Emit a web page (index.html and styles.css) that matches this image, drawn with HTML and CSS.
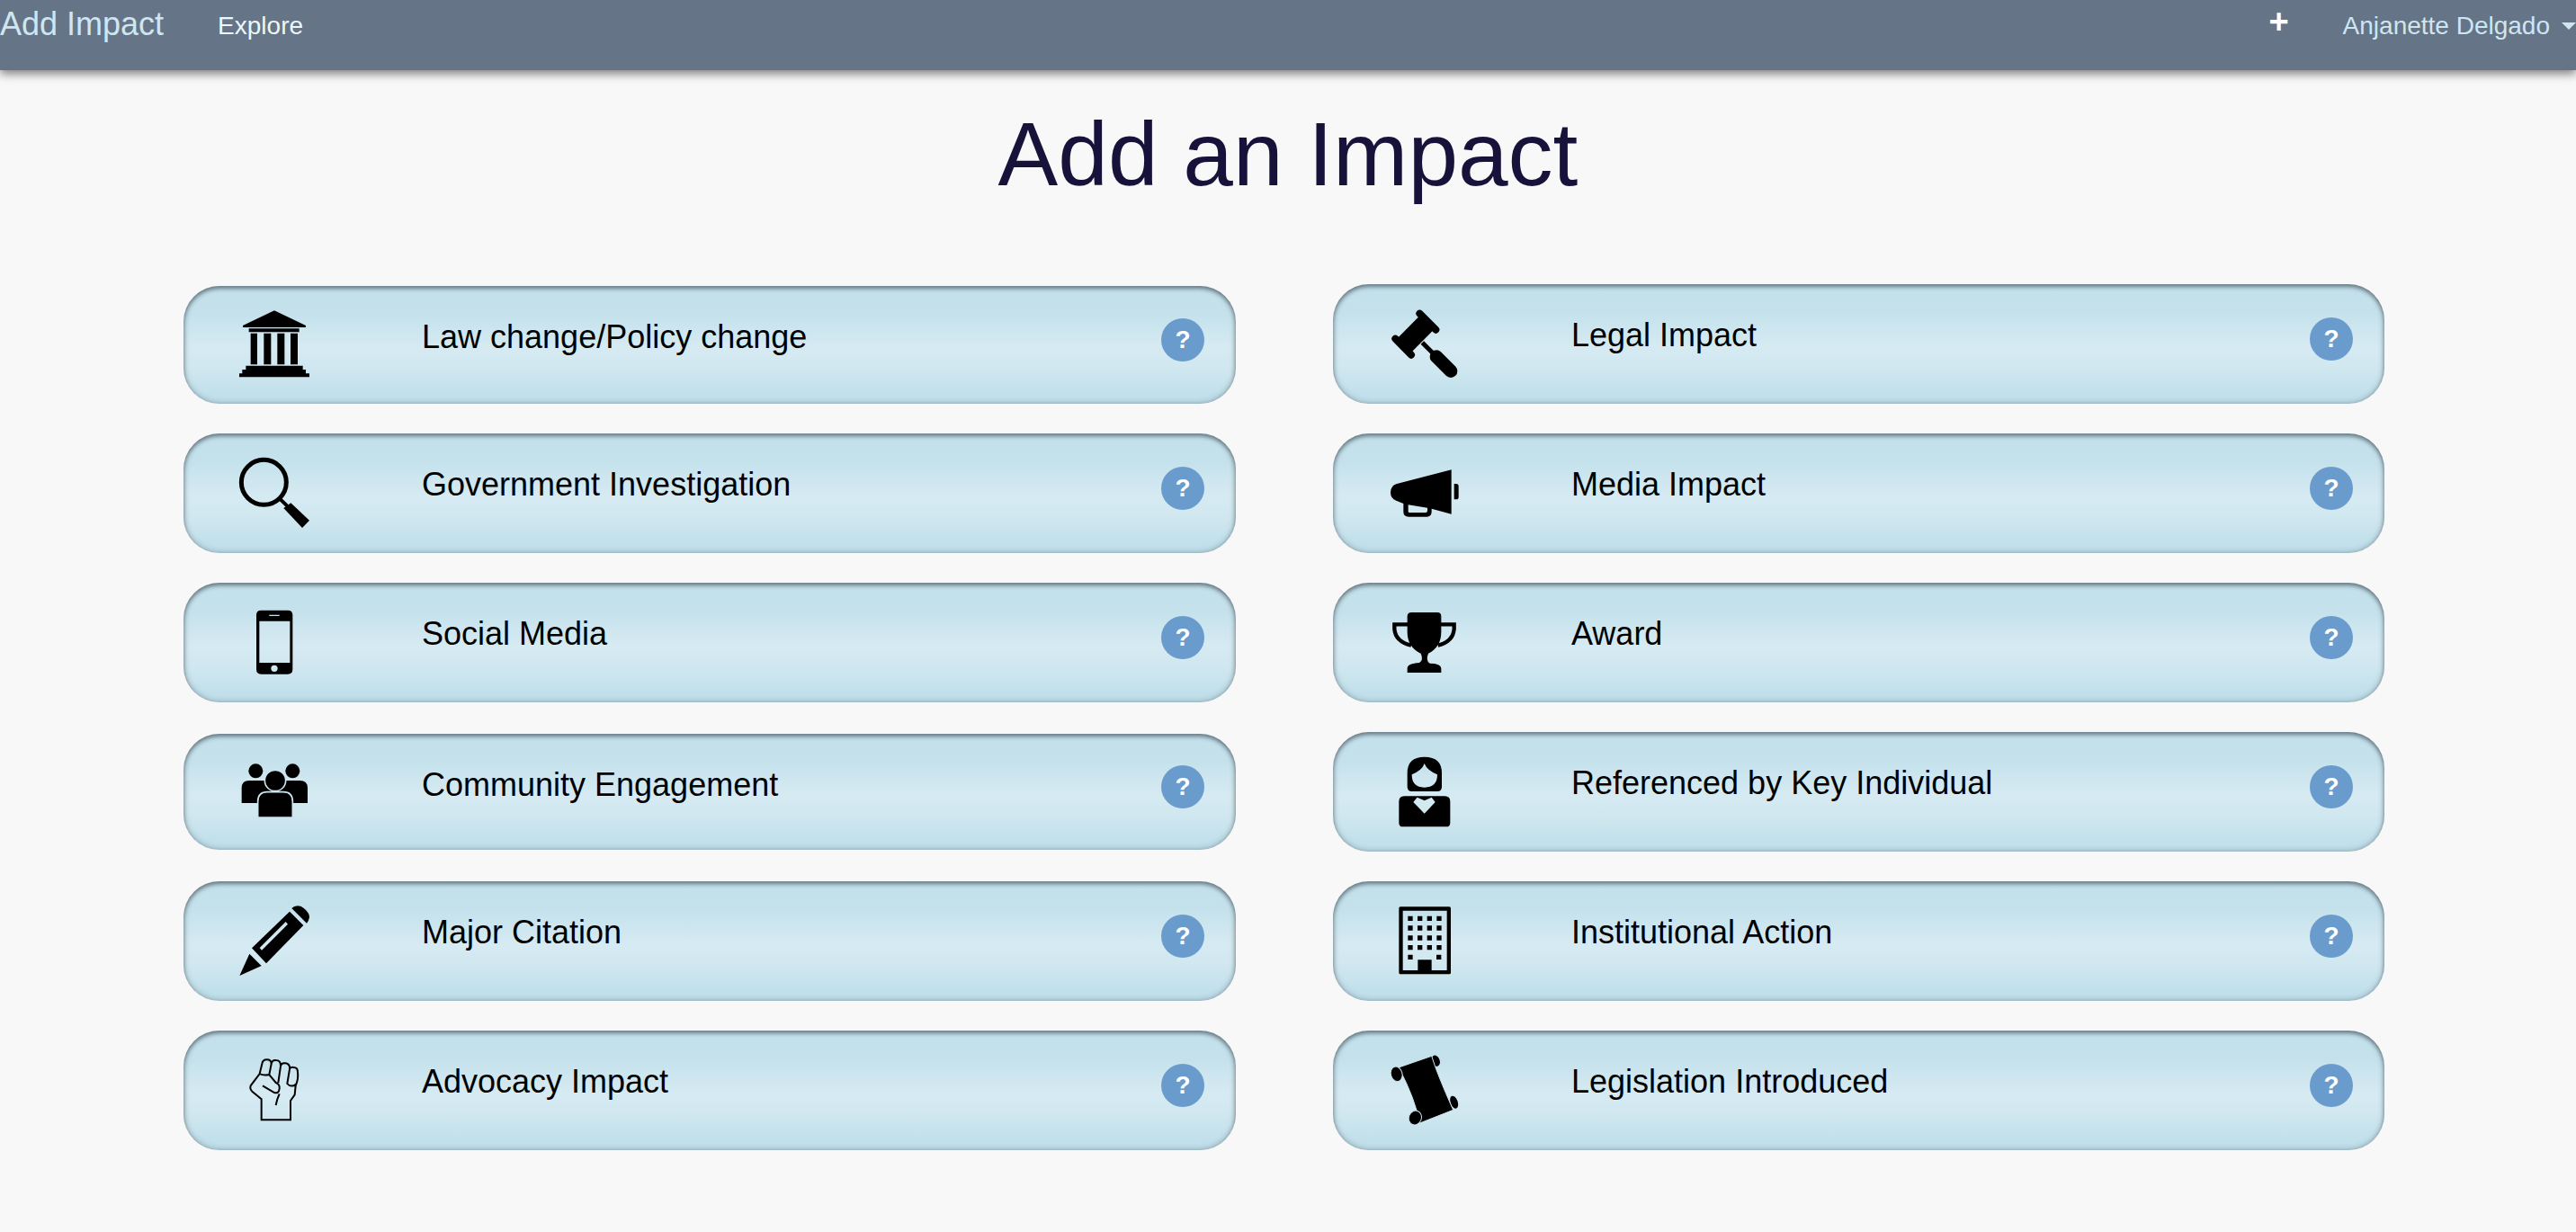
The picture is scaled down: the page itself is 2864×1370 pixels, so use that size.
FILE: index.html
```html
<!DOCTYPE html>
<html lang="en">
<head>
<meta charset="utf-8">
<title>Add an Impact</title>
<link rel="stylesheet" href="styles.css">
</head>
<body>
<nav class="navbar">
  <a class="brand">Add Impact</a>
  <a class="nav-link">Explore</a>
  <a class="nav-plus">+</a>
  <a class="nav-user">Anjanette Delgado<span class="caret"></span></a>
</nav>
<main class="page">
  <h1 class="title">Add an Impact</h1>
  <div class="grid">
    <div class="card card--low">
      <svg class="icon" viewBox="225 131 240 240"><path d="M345 138L450 188V194H240V188Z"/><path d="M260 198H428V210H260ZM266 214H288V318H266ZM310 214H334V318H310ZM355 214H379V318H355ZM399 214H423V318H399ZM250 322H440V335H450V348H462V360H228V348H238V335H250Z"/></svg>
      <span class="label">Law change/Policy change</span><span class="help">?</span>
    </div>
    <div class="card">
      <svg class="icon" viewBox="220 128 240 240"><path class="ln" stroke-width="24" stroke-linecap="round" d="M326 148L380 202M245 232L298 286"/><path class="ln" stroke-width="66" d="M356 172L270 259"/><path class="ln" stroke-width="15" d="M335 245L378 288"/><path class="ln" stroke-width="44" stroke-linecap="round" d="M382 292L430 340"/></svg>
      <span class="label">Legal Impact</span><span class="help">?</span>
    </div>
    <div class="card">
      <svg class="icon" viewBox="225 626 240 240"><circle class="ln" cx="310" cy="711" r="75" stroke-width="15"/><path class="ln" stroke-width="12" d="M360 763L388 790"/><path d="M376 797L400 780L462 838L438 863Z"/></svg>
      <span class="label">Government Investigation</span><span class="help">?</span>
    </div>
    <div class="card">
      <svg class="icon" viewBox="220 626 240 240"><path d="M432 669V817L366 799V810Q365 826 350 826H290Q272 826 272 810V782L248 772Q229 765 229 745Q229 722 250 716ZM288 786V808Q288 812 292 812H346Q352 812 352 806V796Z" fill-rule="evenodd"/><path d="M441 716H448Q456 716 456 724V760Q456 768 448 768H441Z"/></svg>
      <span class="label">Media Impact</span><span class="help">?</span>
    </div>
    <div class="card">
      <svg class="icon" viewBox="225 104 240 240"><path fill-rule="evenodd" d="M301 118H390Q406 118 406 134V315Q406 331 390 331H301Q285 331 285 315V134Q285 118 301 118ZM295 154V293H397V154ZM328 133V137H362V133ZM345 301A11 11 0 1 0 345.01 323A11 11 0 1 0 345 301Z"/></svg>
      <span class="label">Social Media</span><span class="help">?</span>
    </div>
    <div class="card">
      <svg class="icon" viewBox="220 104 240 240"><path d="M300 125H385Q398 125 398 138V190Q398 240 355 262Q345 285 360 295Q398 295 398 312V326H285V312Q285 295 325 293Q340 285 330 262Q285 240 285 190V138Q285 125 300 125Z"/><path class="ln" stroke-width="13" d="M288 165H242V180Q245 222 298 235M395 165H441V180Q438 222 387 235"/></svg>
      <span class="label">Award</span><span class="help">?</span>
    </div>
    <div class="card card--small">
      <svg class="icon" viewBox="225 601 240 240"><circle cx="283" cy="653" r="24"/><circle cx="406" cy="653" r="24"/><path d="M236 760V710Q236 685 261 685H430Q456 685 456 710V760Z"/><circle class="cut" cx="348" cy="685" r="35"/><path class="cut" d="M290 808V755Q290 723 322 723H375Q406 723 406 755V808Z"/></svg>
      <span class="label">Community Engagement</span><span class="help">?</span>
    </div>
    <div class="card">
      <svg class="icon" viewBox="220 601 240 240"><path fill-rule="evenodd" d="M285 660Q285 606 342 606Q400 606 400 660V705Q400 721 385 721H300Q285 721 285 705ZM342 628Q335 650 300 665Q300 708 342 708Q385 708 385 665Q350 650 342 628Z"/><path fill-rule="evenodd" d="M257 755Q257 737 275 737H410Q428 737 428 755V825Q428 839 415 839H270Q257 839 257 825ZM305 757L342 795L378 757L366 741L342 752L318 741Z"/></svg>
      <span class="label">Referenced by Key Individual</span><span class="help">?</span>
    </div>
    <div class="card">
      <svg class="icon" viewBox="225 141 240 240"><path d="M229 378L262 305L302 345Z"/><path fill-rule="evenodd" d="M270 286L396 164L442 210L318 337ZM296 285L303 293L390 206L383 198Z"/><path d="M403 153Q415 140 435 147Q462 165 462 183Q460 195 453 203Z"/></svg>
      <span class="label">Major Citation</span><span class="help">?</span>
    </div>
    <div class="card">
      <svg class="icon" viewBox="220 141 240 240"><path fill-rule="evenodd" d="M262 148H425Q430 148 430 153V368Q430 373 425 373H262Q257 373 257 368V153Q257 148 262 148ZM270 161V360H320V325H366V360H417V161Z"/><path class="ln" stroke-width="16" stroke-dasharray="16 16" d="M287 187H399M287 219H399M287 252H399M287 284H399"/><path class="ln" stroke-width="16" d="M287 316H303M382 316H398"/></svg>
      <span class="label">Institutional Action</span><span class="help">?</span>
    </div>
    <div class="card">
      <svg class="icon" viewBox="225 639 240 240"><path class="ln" stroke-width="6" d="M302 790V859H399V795L413 775L416 745Q426 722 423 700Q423 684 410 684Q398 682 396 690Q398 672 382 670Q368 668 366 680Q367 660 350 660Q338 658 335 672Q335 658 320 658Q306 658 304 672L296 705L266 745Q262 755 272 765ZM296 705Q308 712 328 708L350 735Q364 740 362 755Q360 772 345 768L306 745M335 672L328 708M366 680L358 735M396 690L388 738Q396 748 408 745Q416 744 416 738M362 772L355 790L350 810"/></svg>
      <span class="label">Advocacy Impact</span><span class="help">?</span>
    </div>
    <div class="card">
      <svg class="icon" viewBox="220 639 240 240"><ellipse cx="380" cy="662" rx="13" ry="19" transform="rotate(-20 380 662)"/><ellipse cx="441" cy="800" rx="12" ry="22" transform="rotate(-20 441 800)"/><path class="cut cut--thin" d="M256 684L366 646Q384 705 438 826L326 870Q312 790 256 684Z"/><ellipse class="cut cut--thin" cx="249" cy="706" rx="19" ry="25" transform="rotate(-15 249 706)"/><ellipse class="cut cut--thin" cx="311" cy="852" rx="21" ry="24" transform="rotate(20 311 852)"/></svg>
      <span class="label">Legislation Introduced</span><span class="help">?</span>
    </div>
  </div>
</main>
</body>
</html>
```

FILE: styles.css
```css
* { box-sizing: border-box; }
html, body { margin: 0; padding: 0; }
body {
  background: #f8f8f8;
  font-family: "Liberation Sans", Arial, sans-serif;
  color: #000;
  overflow: hidden;
  height: 1370px;
}
.navbar {
  display: flex;
  align-items: flex-start;
  height: 78px;
  background: #667487;
  box-shadow: 0 4px 10px rgba(0, 0, 0, 0.5);
  position: relative;
}
.brand {
  font-size: 36px;
  line-height: 54px;
  color: #cfe6f0;
}
.nav-link {
  font-size: 28px;
  line-height: 58px;
  color: #eef6f9;
  margin-left: 60px;
}
.nav-plus {
  margin-left: auto;
  font-size: 38px;
  font-weight: bold;
  line-height: 48px;
  color: #fff;
}
.nav-user {
  font-size: 28px;
  line-height: 58px;
  color: #cfe6f0;
  margin-left: 60px;
  display: flex;
  align-items: center;
  white-space: nowrap;
}
.caret {
  width: 0;
  height: 0;
  margin-left: 13px;
  border-left: 8px solid transparent;
  border-right: 8px solid transparent;
  border-top: 8px solid #cfe6f0;
}
.title {
  margin: 0;
  padding-top: 36px;
  text-align: center;
  font-size: 100px;
  font-weight: normal;
  line-height: 115px;
  color: #17123a;
}
.grid {
  display: grid;
  grid-template-columns: 1170px 1169px;
  column-gap: 108px;
  grid-auto-rows: 132.8px;
  row-gap: 33.2px;
  margin: 87px 0 0 204px;
}
.card {
  display: flex;
  align-items: center;
  border-radius: 40px;
  background: linear-gradient(#c2e0eb 0%, #c5e2ec 25%, #d6eaf2 52%, #d1e8f0 68%, #c1e0eb 92%);
  box-shadow: inset 0 3px 4px rgba(50, 60, 70, 0.5), inset 0 0 7px rgba(50, 60, 70, 0.4);
}
.card--low { margin-top: 2px; }
.card--small { margin: 2px 0; }
.icon {
  flex: none;
  width: 80px;
  height: 80px;
  margin-left: 61px;
}
.ln { fill: none; stroke: #000; }
.cut { stroke: #cde5ee; stroke-width: 5; }
.cut--thin { stroke-width: 3; }
.label {
  align-self: flex-start;
  margin: 32px 0 0 124px;
  font-size: 36px;
  line-height: 50px;
}
.help {
  flex: none;
  width: 48px;
  height: 48px;
  margin: 0 35px 11px auto;
  border-radius: 50%;
  background: #6a9bcd;
  color: #fff;
  font-size: 28px;
  font-weight: bold;
  line-height: 48px;
  text-align: center;
}
```
